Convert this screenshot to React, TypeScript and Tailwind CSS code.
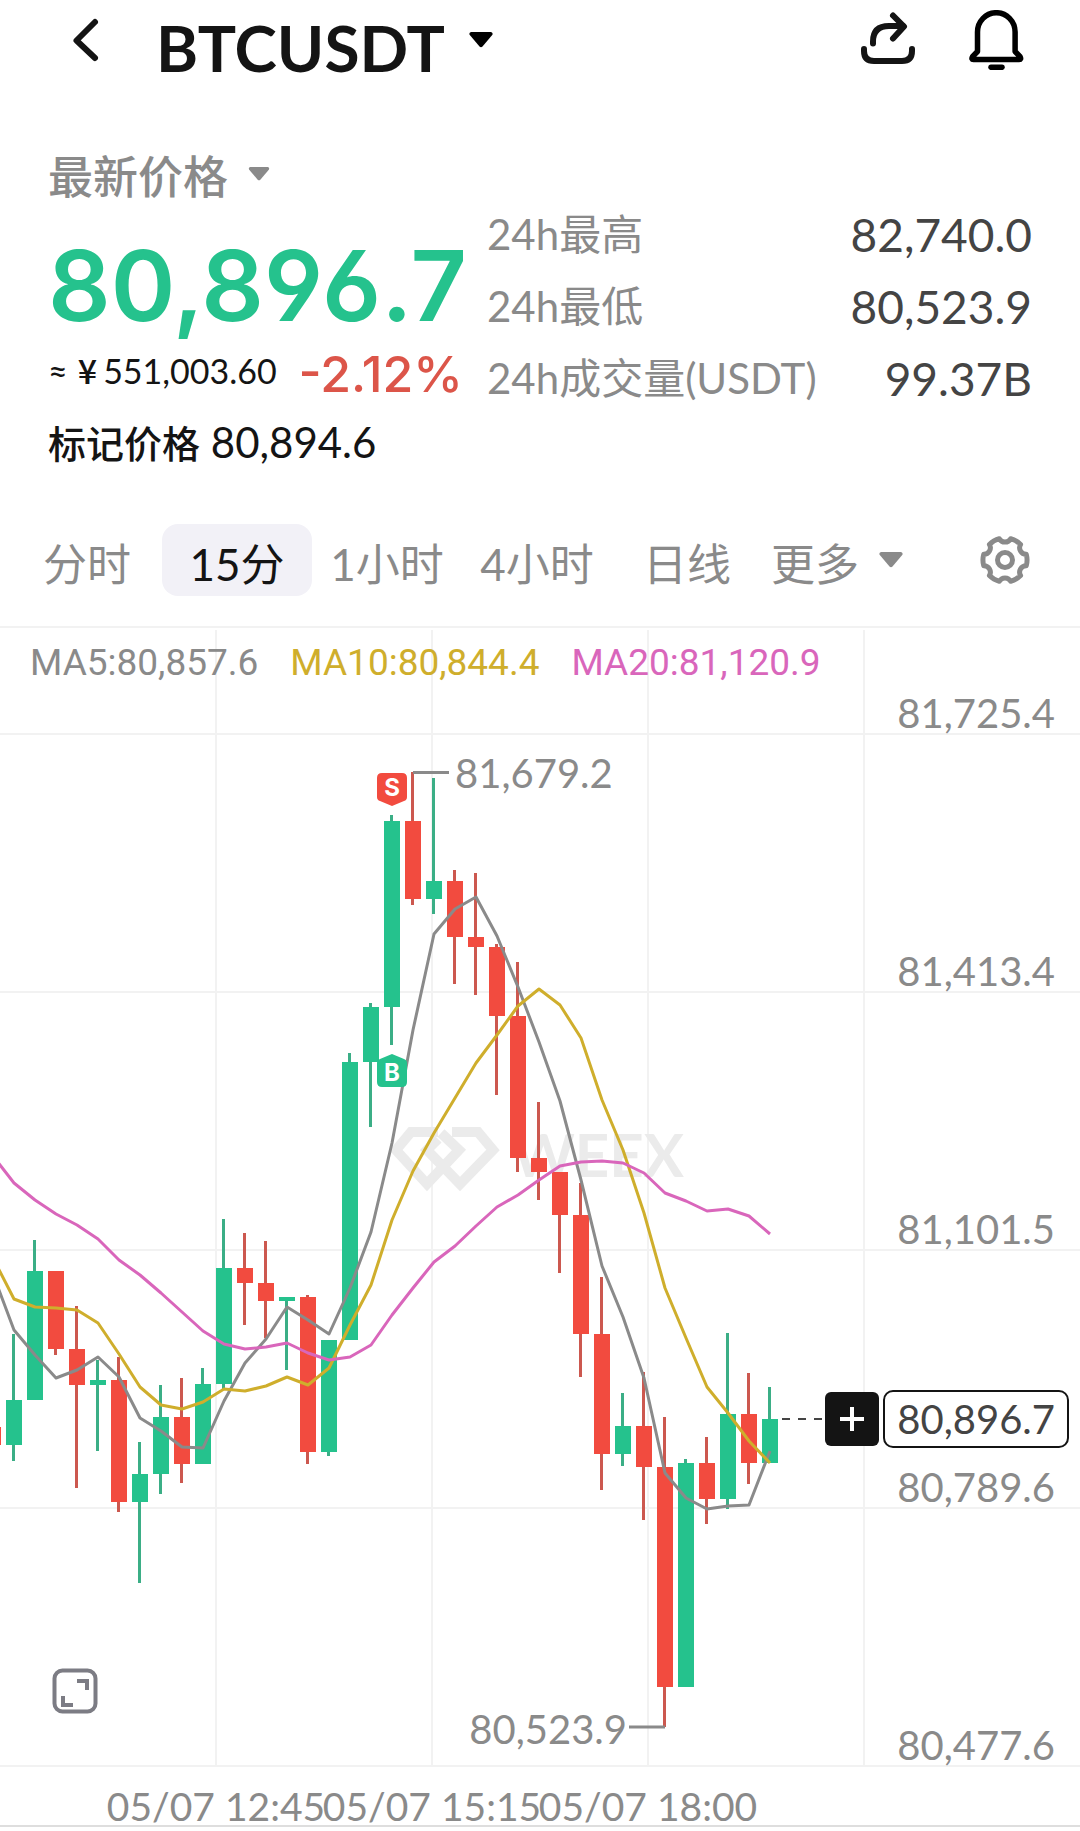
import { useState } from "react";

type Candle = {
  high: number;
  top: number;
  bottom: number;
  low: number;
  up: boolean;
};

const UP = "#25c28d";
const DOWN = "#f24b3f";
const WICK_UP = "#3bae86";
const WICK_DOWN = "#cc584f";

// chart canvas, candles are laid out every STEP units starting at FIRST_X
const CHART_TOP = 626;
const CHART_HEIGHT = 1205;
const FIRST_X = -7;
const STEP = 21;
const LAST_Y = 1419;

const c = (high: number, top: number, bottom: number, low: number, up: boolean): Candle => ({
  high,
  top,
  bottom,
  low,
  up,
});

const candles: Candle[] = [
  c(1427, 1427, 1445, 1445, false),
  c(1334, 1400, 1445, 1461, true),
  c(1240, 1271, 1400, 1400, true),
  c(1271, 1271, 1349, 1355, false),
  c(1306, 1349, 1385, 1488, false),
  c(1360, 1380, 1385, 1451, true),
  c(1357, 1380, 1502, 1512, false),
  c(1442, 1474, 1502, 1583, true),
  c(1385, 1417, 1474, 1494, true),
  c(1378, 1417, 1464, 1483, false),
  c(1368, 1384, 1464, 1464, true),
  c(1219, 1268, 1384, 1390, true),
  c(1233, 1268, 1283, 1325, false),
  c(1241, 1283, 1301, 1338, false),
  c(1297, 1297, 1301, 1370, true),
  c(1295, 1297, 1452, 1464, false),
  c(1340, 1340, 1452, 1456, true),
  c(1053, 1062, 1340, 1340, true),
  c(1003, 1007, 1062, 1127, true),
  c(815, 821, 1007, 1045, true),
  c(772, 821, 899, 905, false),
  c(778, 881, 899, 914, true),
  c(870, 881, 937, 984, false),
  c(873, 937, 947, 995, false),
  c(944, 947, 1016, 1095, false),
  c(962, 1016, 1158, 1172, false),
  c(1102, 1158, 1172, 1200, false),
  c(1172, 1172, 1215, 1273, false),
  c(1183, 1215, 1334, 1377, false),
  c(1277, 1334, 1454, 1490, false),
  c(1393, 1426, 1454, 1466, true),
  c(1372, 1426, 1467, 1520, false),
  c(1417, 1467, 1687, 1727, false),
  c(1459, 1463, 1687, 1687, true),
  c(1437, 1463, 1499, 1524, false),
  c(1333, 1414, 1499, 1509, true),
  c(1373, 1414, 1463, 1484, false),
  c(1387, 1419, 1463, 1463, true),
];

const ma5 = [
  1274, 1330, 1355, 1378, 1370, 1357, 1377, 1418, 1431, 1447, 1448, 1401, 1363, 1339, 1307, 1320,
  1334, 1288, 1232, 1143, 1030, 934, 909, 897, 936, 987, 1042, 1101, 1180, 1266, 1317, 1378, 1473,
  1498, 1509, 1506, 1505, 1451,
];
const ma10 = [
  1258, 1299, 1307, 1308, 1310, 1323, 1354, 1387, 1405, 1409, 1402, 1389, 1391, 1386, 1377, 1385,
  1368, 1325, 1285, 1220, 1171, 1133, 1098, 1063, 1035, 1006, 989, 1005, 1038, 1100, 1150, 1213,
  1288, 1338, 1387, 1413, 1441, 1463,
];
const ma20 = [
  1156, 1183, 1200, 1214, 1225, 1239, 1260, 1275, 1293, 1312, 1331, 1344, 1349, 1347, 1343, 1353,
  1360, 1357, 1345, 1315, 1288, 1262, 1246, 1226, 1207, 1195, 1180, 1166, 1162, 1161, 1163, 1173,
  1193, 1201, 1211, 1209, 1216, 1234,
];

const priceAxis = [
  { y: 734, label: "81,725.4" },
  { y: 992, label: "81,413.4" },
  { y: 1250, label: "81,101.5" },
  { y: 1508, label: "80,789.6" },
  { y: 1766, label: "80,477.6" },
];

const timeAxis = [
  { x: 216, label: "05/07 12:45" },
  { x: 432, label: "05/07 15:15" },
  { x: 648, label: "05/07 18:00" },
];

const stats = [
  { label: "24h最高", value: "82,740.0" },
  { label: "24h最低", value: "80,523.9" },
  { label: "24h成交量(USDT)", value: "99.37B" },
];

const tabs = ["分时", "15分", "1小时", "4小时", "日线", "更多"];

const toPoints = (values: number[]) =>
  values.map((y, i) => `${FIRST_X + i * STEP},${y}`).join(" ");

const Caret = ({ className }: { className: string }) => (
  <svg viewBox="0 0 24 16" className={className} fill="currentColor" aria-hidden="true">
    <path d="M2 0h20q2.500 .8 1.200 3L13.500 14.500q-1.500 1.500-3 0L.8 3Q-.5 .8 2 0z" />
  </svg>
);

const Header = () => (
  <header className="flex h-20 items-center pl-[70px] pr-[56px] text-[#141414]">
    <button type="button" aria-label="返回">
      <svg viewBox="0 0 32 48" className="h-12 w-8" fill="none" stroke="currentColor" strokeWidth="6" strokeLinecap="round" strokeLinejoin="round">
        <path d="M25 6 6.500 24.500 25 42" />
      </svg>
    </button>
    <button type="button" className="ml-[54px] flex items-center gap-6">
      <h1 className="pt-4 font-['Lato'] text-[64px] leading-none font-bold">BTCUSDT</h1>
      <Caret className="h-4 w-6 text-black" />
    </button>
    <button type="button" aria-label="分享" className="ml-auto">
      <svg viewBox="0 0 54 60" className="h-[60px] w-[54px]" fill="none" stroke="currentColor" strokeWidth="6" strokeLinecap="round" strokeLinejoin="round">
        <path d="M3 39v2q0 10 10 10h28q10 0 10-10v-2" />
        <path d="M12 33.500v-2Q12 16 28 16h14" />
        <path d="M32 5.500 43 16.500 32 28.500" />
      </svg>
    </button>
    <button type="button" aria-label="提醒" className="ml-[53px]">
      <svg viewBox="0 0 56 60" className="h-[60px] w-14 text-black" fill="none" stroke="currentColor" strokeWidth="5.500" strokeLinecap="round" strokeLinejoin="round">
        <path d="M9.500 41.500V22a18.800 19.300 0 0 1 37.600 0v19.500l5 5.200q1.500 2.800-1 2.800H5.500q-2.500 0-1-2.800z" />
        <path d="M23 57.300h11" />
      </svg>
    </button>
  </header>
);

const PriceSummary = () => (
  <section className="flex gap-6 pt-[70px] pr-12 pl-12">
    <div className="w-[415px] shrink-0">
      <button type="button" className="flex h-14 items-center gap-5 text-[45px] text-[#8a8a8a]">
        <span className="font-medium">最新价格</span>
        <Caret className="-mt-2 h-3.5 w-[22px]" />
      </button>
      <p className="mt-8 font-['Inter'] text-[98px] leading-24 font-semibold text-[#25c28d] [font-feature-settings:'ss01']">
        80,896.7
      </p>
      <div className="mt-3 flex h-14 items-center justify-between whitespace-nowrap">
        <span className="pb-2 text-[34px] text-[#141414]">
          ≈<span className="mr-1.5 ml-2.5 font-['Noto_Sans_CJK_SC'] font-medium">¥</span>551,003.60
        </span>
        <span className="font-['Inter'] text-[50px] font-medium text-[#dc5549]">-2.12%</span>
      </div>
      <p className="mt-4 h-12 text-[42px] leading-12 whitespace-nowrap text-[#141414]">
        <span className="text-[38px] font-medium">标记价格</span> 80,894.6
      </p>
    </div>

    <dl className="min-w-0 grow pt-[48px]">
      {stats.map((s) => (
        <div key={s.label} className="flex h-[72px] items-center justify-between whitespace-nowrap">
          <dt className="text-[42px] text-[#8a8a8a]">{s.label}</dt>
          <dd className="text-[46px] text-[#444]">{s.value}</dd>
        </div>
      ))}
    </dl>
  </section>
);

const IntervalTabs = () => {
  const [active, setActive] = useState("15分");

  return (
    <nav className="mt-[58px] flex h-[72px] items-center pr-[50px] pl-3">
      <div className="grid grow grid-cols-6">
        {tabs.map((tab) => (
          <button
            key={tab}
            type="button"
            onClick={() => setActive(tab)}
            className={`flex h-[72px] items-center justify-center gap-5 rounded-2xl pt-2 text-[44px] whitespace-nowrap ${
              active === tab ? "bg-[#f2f1f7] text-[#141414]" : "text-[#8a8a8a]"
            }`}
          >
            {tab}
            {tab === "更多" && <Caret className="-mt-2 h-4 w-6" />}
          </button>
        ))}
      </div>
      <button type="button" aria-label="设置" className="ml-[68px] text-[#8a8a8a]">
        <svg viewBox="0 0 50 50" className="size-[50px]" fill="none" stroke="currentColor" strokeWidth="5" strokeLinejoin="round">
          <path d="M30.700 3.700A22 22 0 0 1 40.600 9.400A6.500 6.500 0 0 0 46.300 19.300A22 22 0 0 1 46.300 30.700A6.500 6.500 0 0 0 40.600 40.600A22 22 0 0 1 30.700 46.300A6.500 6.500 0 0 0 19.300 46.300A22 22 0 0 1 9.400 40.600A6.500 6.500 0 0 0 3.700 30.700A22 22 0 0 1 3.700 19.300A6.500 6.500 0 0 0 9.400 9.400A22 22 0 0 1 19.300 3.700A6.500 6.500 0 0 0 30.700 3.700z" />
          <circle cx="25" cy="25" r="7.500" />
        </svg>
      </button>
    </nav>
  );
};

const Watermark = () => (
  <g>
    <g fill="none" stroke="#ebebeb" strokeWidth="10">
      <path d="M438 1132H411L396 1150 427 1184 459 1150 441 1133" />
      <path d="M452 1132H478L493 1150 460 1184 427 1150 438 1139" />
    </g>
    <text x="684" y="1177" textAnchor="end" fill="#ebebeb" className="text-[60px] font-bold">
      WEEX
    </text>
  </g>
);

const Chart = () => (
  <section className="relative mt-[30px]">
    <svg
      viewBox={`0 ${CHART_TOP} 1080 ${CHART_HEIGHT}`}
      className="block w-full"
      role="img"
      aria-label="BTCUSDT 15分"
    >
      {/* GRID */}
      <g stroke="#f2f2f2" strokeWidth="2">
        <path d="M0 627H1080" />
        {priceAxis.map((p) => (
          <path key={p.y} d={`M0 ${p.y}H1080`} />
        ))}
        {[216, 432, 648, 864].map((x) => (
          <path key={x} d={`M${x} 630V1766`} />
        ))}
      </g>
      <path d="M0 1826H1080" stroke="#dedede" strokeWidth="2" />

      <Watermark />

      {/* CANDLES */}
      {candles.map((k, i) => {
        const x = FIRST_X + i * STEP;
        return (
          <g key={i}>
            <rect x={x - 2} y={k.high} width="3" height={k.low - k.high} fill={k.up ? WICK_UP : WICK_DOWN} />
            <rect x={x - 8} y={k.top} width="16" height={k.bottom - k.top} fill={k.up ? UP : DOWN} />
          </g>
        );
      })}

      {/* MOVING AVERAGES */}
      <g fill="none" strokeWidth="3" strokeLinejoin="round">
        <polyline points={toPoints(ma5)} stroke="#8a8a8a" />
        <polyline points={toPoints(ma10)} stroke="#cfae2c" />
        <polyline points={toPoints(ma20)} stroke="#d966bb" />
      </g>

      {/* HIGH / LOW */}
      <g stroke="#8a8a8a" strokeWidth="3">
        <path d="M413 772.500H449" />
        <path d="M629 1727H665" />
      </g>
      <g fill="#8a8a8a" className="text-[40px]">
        <text x="455" y="788">81,679.2</text>
        <text x="627" y="1744" textAnchor="end">80,523.9</text>
      </g>

      {/* TRADE MARKS */}
      <g className="font-['Inter'] text-2xl font-bold" fill="#fff" textAnchor="middle">
        <path d="M382 773h20q5 0 5 5v19q0 3-3 4l-12 5-12-5q-3-1-3-4v-19q0-5 5-5z" fill={DOWN} />
        <text x="392" y="796">S</text>
        <path d="M382 1087h20q5 0 5-5v-19q0-3-3-4l-12-5-12 5q-3 1-3 4v19q0 5 5 5z" fill={UP} />
        <text x="392" y="1081">B</text>
      </g>

      {/* AXES */}
      <g fill="#8a8a8a" className="text-[40px]">
        {priceAxis.map((p) => (
          <text key={p.label} x="1055" y={p.y - 6} textAnchor="end">
            {p.label}
          </text>
        ))}
      </g>
      <g fill="#8a8a8a" className="text-[39px]">
        {timeAxis.map((t) => (
          <text key={t.label} x={t.x} y="1821" textAnchor="middle">
            {t.label}
          </text>
        ))}
      </g>
      <path d={`M782 ${LAST_Y}H822`} stroke="#444" strokeWidth="2" strokeDasharray="8 8" />
    </svg>

    <div className="absolute top-3 left-[30px] flex gap-8 font-['Roboto'] text-[37px] leading-[50px] whitespace-nowrap">
      <span className="text-[#8a8a8a]">MA5:80,857.6</span>
      <span className="text-[#cfae2c]">MA10:80,844.4</span>
      <span className="text-[#d966bb]">MA20:81,120.9</span>
    </div>

    <div
      className="absolute right-[11px] flex -translate-y-1/2 items-center gap-1"
      style={{ top: `${((LAST_Y - CHART_TOP) / CHART_HEIGHT) * 100}%` }}
    >
      <button type="button" aria-label="下单" className="flex size-[54px] items-center justify-center rounded-md bg-[#141414] text-white">
        <svg viewBox="0 0 24 24" className="size-6" stroke="currentColor" strokeWidth="4">
          <path d="M12 0v24M0 12h24" />
        </svg>
      </button>
      <span className="rounded-[10px] border-2 border-[#141414] bg-white px-3 text-[40px] leading-[54px] text-[#444]">
        80,896.7
      </span>
    </div>

    <button type="button" aria-label="全屏" className="absolute bottom-[117px] left-[52px] text-[#7c7c84]">
      <svg viewBox="0 0 46 46" className="size-[46px]" fill="none" stroke="currentColor" strokeWidth="4">
        <rect x="2.500" y="2.500" width="41" height="41" rx="8" />
        <path d="M25 13h10v9M11 28v9h10" />
      </svg>
    </button>
  </section>
);

const App = () => {
  return (
    <main className="min-h-screen overflow-hidden bg-white font-['Lato','Noto_Sans_CJK_SC',sans-serif]">
      <Header />
      <PriceSummary />
      <IntervalTabs />
      <Chart />
    </main>
  );
};

export default App;
